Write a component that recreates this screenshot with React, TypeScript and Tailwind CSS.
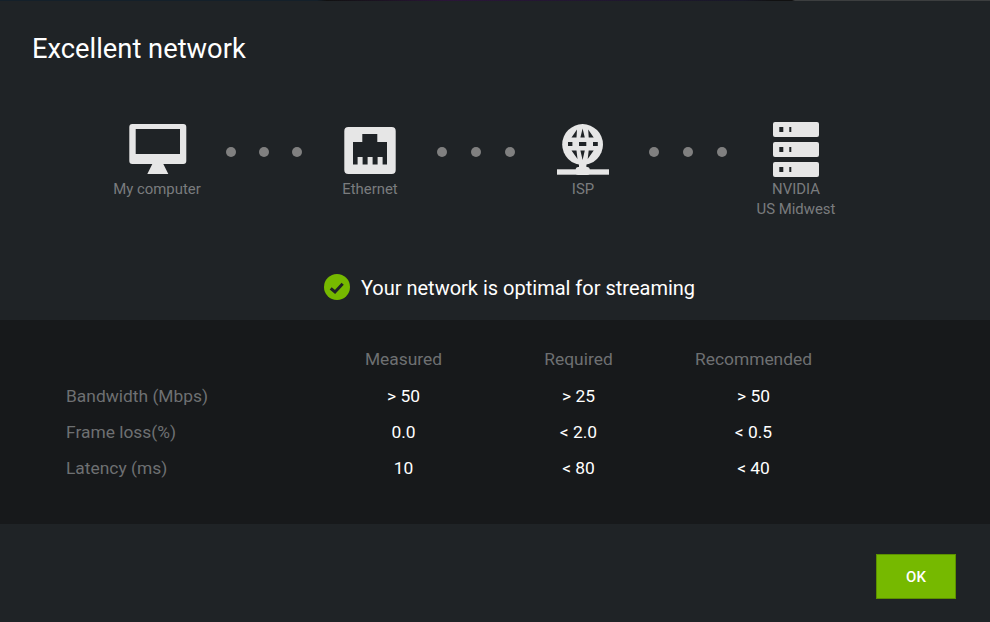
const rows = [
  { label: "Bandwidth (Mbps)", measured: "> 50", required: "> 25", recommended: "> 50" },
  { label: "Frame loss(%)", measured: "0.0", required: "< 2.0", recommended: "< 0.5" },
  { label: "Latency (ms)", measured: "10", required: "< 80", recommended: "< 40" },
];

function ComputerIcon() {
  return (
    <svg width="60" height="56" viewBox="0 0 60 56" className="block">
      <g transform="translate(2.3 3)" fill="#e6e6e6">
        <path
          fillRule="evenodd"
          d="M3 0h51a3 3 0 0 1 3 3v34a3 3 0 0 1-3 3H3a3 3 0 0 1-3-3V3a3 3 0 0 1 3-3zM6.4 5v25h44.3V5z"
        />
        <path d="M23 40h11l5 10H18z" />
      </g>
    </svg>
  );
}

function EthernetIcon() {
  return (
    <svg width="60" height="56" viewBox="0 0 60 56" className="block">
      <g transform="translate(4.3 6)">
        <path
          fillRule="evenodd"
          fill="#e6e6e6"
          d="M4 0h43.4a4 4 0 0 1 4 4v39a4 4 0 0 1-4 4H4a4 4 0 0 1-4-4V4a4 4 0 0 1 4-4zM18 7v8H8.7v22.5h4.6V30h5v7.5h5V30h5v7.5h5V30h5v7.5h4.4V15H33V7z"
        />
      </g>
    </svg>
  );
}

function IspIcon() {
  return (
    <svg width="60" height="56" viewBox="0 0 60 56" className="block">
      <g transform="translate(4 3)">
        <circle cx="25.6" cy="20.5" r="20.4" fill="#e6e6e6" />
        <g fill="#1f2326">
          <path d="M20 5.5L14.5 13.5h5zM31.2 5.5L36.7 13.5h-5zM25.6 4.5L27.8 13.5h-4.4z" />
          <rect x="11" y="18" width="4.4" height="4" />
          <rect x="22" y="18" width="7.3" height="4" />
          <rect x="36" y="18" width="4.8" height="4" />
          <path d="M14.5 26.5h5l1 8.5zM36.7 26.5h-5l-1 8.5zM23.4 26.5h4.4l-2.2 9.5z" />
        </g>
        <rect x="0" y="45.3" width="52" height="5.4" fill="#e6e6e6" />
        <rect x="22" y="40" width="7.4" height="6" fill="#e6e6e6" />
        <rect x="18.7" y="43" width="14" height="8" rx="2.5" fill="#e6e6e6" />
      </g>
    </svg>
  );
}

function ServerIcon() {
  return (
    <svg width="60" height="56" viewBox="0 0 60 56" className="block">
      {[1, 21, 41].map((y) => (
        <g key={y}>
          <rect x="7" y={y} width="46" height="15" rx="2" fill="#e6e6e6" />
          <rect x="13.3" y={y + 5} width="4" height="5" fill="#1f2326" />
          <rect x="23.3" y={y + 5} width="2" height="5" fill="#1f2326" />
        </g>
      ))}
    </svg>
  );
}

function Node({ label, icon }: { label: React.ReactNode; icon: React.ReactNode }) {
  return (
    <div className="w-[100px] shrink-0 flex flex-col items-center">
      <div className="h-[56px] flex items-center justify-center">{icon}</div>
      <div className="mt-[2px] text-[14.9px] leading-[20px] whitespace-nowrap text-center text-[#7a7c7e]">{label}</div>
    </div>
  );
}

function Dot() {
  return <span className="w-[10px] h-[10px] rounded-full bg-[#808080]" />;
}

function Dots({ className }: { className: string }) {
  return (
    <div className={`w-[113px] h-[56px] mt-[3px] shrink-0 flex items-center justify-center ${className}`}>
      <Dot />
      <Dot />
      <Dot />
    </div>
  );
}

export default function App() {
  return (
    <div className="w-[990px] h-[622px] overflow-hidden bg-[#1f2326] flex flex-col font-['Roboto',sans-serif]">
      <div className="h-px shrink-0 bg-[linear-gradient(90deg,#14202a_0%,#14202a_32%,#111111_33%,#2a1538_45%,#181828_75%,#111111_78%,#111111_80%,#3c3e3f_80.3%)]" />
      <h1 className="pt-[30px] pl-[32px] text-[27.3px] leading-[36px] font-normal text-white">Excellent network</h1>

      <div className="mt-[54px] pl-[107px] flex items-start">
        <Node label="My computer" icon={<ComputerIcon />} />
        <Dots className="gap-x-[23px]" />
        <Node label="Ethernet" icon={<EthernetIcon />} />
        <Dots className="gap-x-[24px] pr-[2px]" />
        <Node label="ISP" icon={<IspIcon />} />
        <Dots className="gap-x-[24px] pr-[4px]" />
        <Node
          label={
            <>
              NVIDIA
              <br />
              US Midwest
            </>
          }
          icon={<ServerIcon />}
        />
      </div>

      <div className="mt-[55px] h-[26px] flex items-center justify-center gap-[11px] pl-[29px]">
        <svg width="26" height="26" viewBox="0 0 26 26" className="shrink-0 -mt-px">
          <circle cx="13" cy="13" r="13" fill="#76b900" />
          <path d="M6.7 14.3l4.3 3.7 7.7-8.3" fill="none" stroke="#1f2326" strokeWidth="3" />
        </svg>
        <span className="mt-[1px] text-[20px] whitespace-nowrap text-white">Your network is optimal for streaming</span>
      </div>

      <div className="mt-[20px] h-[204px] shrink-0 bg-[#17191b] pt-[21px] pl-[66px]">
        <div className="grid grid-cols-[250px_175px_175px_175px] auto-rows-[36.4px] items-center text-[17.4px]">
          <span />
          <span className="text-center text-[#6e7072]">Measured</span>
          <span className="text-center text-[#6e7072]">Required</span>
          <span className="text-center text-[#6e7072]">Recommended</span>
          {rows.map((row) => (
            <div key={row.label} className="contents">
              <span className="text-[#6e7072]">{row.label}</span>
              <span className="text-center text-white">{row.measured}</span>
              <span className="text-center text-white">{row.required}</span>
              <span className="text-center text-white">{row.recommended}</span>
            </div>
          ))}
        </div>
      </div>

      <div className="flex justify-end pt-[30px] pr-[34px]">
        <button className="w-[80px] h-[45px] pt-[2px] bg-[#76b900] text-white text-[15px] font-medium shadow-[inset_0_0_0_1px_#5c9000]">
          OK
        </button>
      </div>
    </div>
  );
}
